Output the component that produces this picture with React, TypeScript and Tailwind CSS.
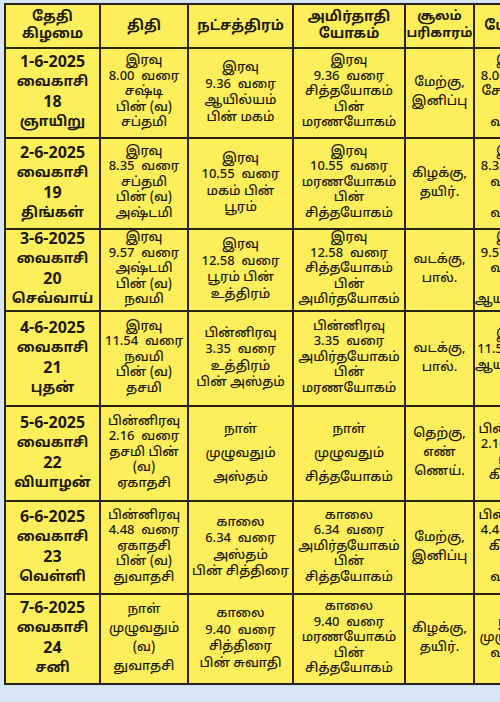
import React from 'react';

type Row = {
    date: string[];
    thithi: string[];
    star: string[];
    yogam: string[];
    soolam: string[];
    extra: string[];
    h: string;
    starLead?: string;
    thithiLead?: string;
};

const rows: Row[] = [
    {
        date: ['1-6-2025', 'வைகாசி', '18', 'ஞாயிறு'],
        thithi: ['இரவு', '8.00  வரை', 'சஷ்டி', 'பின் (வ)', 'சப்தமி'],
        star: ['இரவு', '9.36  வரை', 'ஆயில்யம்', 'பின் மகம்'],
        yogam: ['இரவு', '9.36  வரை', 'சித்தயோகம்', 'பின்', 'மரணயோகம்'],
        soolam: ['மேற்கு,', 'இனிப்பு'],
        extra: ['இரவு', '8.00 வரை', 'சோபனம்', '(வ)', 'வடக்கு'],
        h: 'h-[90px]',
    },
    {
        date: ['2-6-2025', 'வைகாசி', '19', 'திங்கள்'],
        thithi: ['இரவு', '8.35  வரை', 'சப்தமி', 'பின் (வ)', 'அஷ்டமி'],
        star: ['இரவு', '10.55  வரை', 'மகம் பின்', 'பூரம்'],
        yogam: ['இரவு', '10.55  வரை', 'மரணயோகம்', 'பின்', 'சித்தயோகம்'],
        soolam: ['கிழக்கு,', 'தயிர்.'],
        extra: ['இரவு', '8.35 வரை', 'வடக்கு', '(வ)', 'வடக்கு'],
        h: 'h-[91px]',
    },
    {
        date: ['3-6-2025', 'வைகாசி', '20', 'செவ்வாய்'],
        thithi: ['இரவு', '9.57  வரை', 'அஷ்டமி', 'பின் (வ)', 'நவமி'],
        star: ['இரவு', '12.58  வரை', 'பூரம் பின்', 'உத்திரம்'],
        yogam: ['இரவு', '12.58  வரை', 'சித்தயோகம்', 'பின்', 'அமிர்தயோகம்'],
        soolam: ['வடக்கு,', 'பால்.'],
        extra: ['இரவு', '9.57 வரை', 'வடக்கு', '', 'ஆயுஷ்மான்'],
        h: 'h-[82px]',
    },
    {
        date: ['4-6-2025', 'வைகாசி', '21', 'புதன்'],
        thithi: ['இரவு', '11.54  வரை', 'நவமி', 'பின் (வ)', 'தசமி'],
        star: ['பின்னிரவு', '3.35  வரை', 'உத்திரம்', 'பின் அஸ்தம்'],
        yogam: ['பின்னிரவு', '3.35  வரை', 'அமிர்தயோகம்', 'பின்', 'மரணயோகம்'],
        soolam: ['வடக்கு,', 'பால்.'],
        extra: ['இரவு', '11.54 வரை', 'ஆயுஷ்மான்', 'பின்'],
        h: 'h-[95px]',
    },
    {
        date: ['5-6-2025', 'வைகாசி', '22', 'வியாழன்'],
        thithi: ['பின்னிரவு', '2.16  வரை', 'தசமி பின்', '(வ)', 'ஏகாதசி'],
        star: ['நாள்', 'முழுவதும்', 'அஸ்தம்'],
        yogam: ['நாள்', 'முழுவதும்', 'சித்தயோகம்'],
        soolam: ['தெற்கு,', 'எண்', 'ணெய்.'],
        extra: ['பின்னிரவு', '2.16 வரை', 'பூரம்', 'கிழக்கு'],
        h: 'h-[95px]',
        starLead: 'leading-[24px]',
    },
    {
        date: ['6-6-2025', 'வைகாசி', '23', 'வெள்ளி'],
        thithi: ['பின்னிரவு', '4.48  வரை', 'ஏகாதசி', 'பின் (வ)', 'துவாதசி'],
        star: ['காலை', '6.34  வரை', 'அஸ்தம்', 'பின் சித்திரை'],
        yogam: ['காலை', '6.34  வரை', 'அமிர்தயோகம்', 'பின்', 'சித்தயோகம்'],
        soolam: ['மேற்கு,', 'இனிப்பு'],
        extra: ['பின்னிரவு', '4.48 வரை', 'கிழக்கு', '(வ)', 'வடக்கு'],
        h: 'h-[93px]',
    },
    {
        date: ['7-6-2025', 'வைகாசி', '24', 'சனி'],
        thithi: ['நாள்', 'முழுவதும்', '(வ)', 'துவாதசி'],
        star: ['காலை', '9.40  வரை', 'சித்திரை', 'பின் சுவாதி'],
        yogam: ['காலை', '9.40  வரை', 'மரணயோகம்', 'பின்', 'சித்தயோகம்'],
        soolam: ['கிழக்கு,', 'தயிர்.'],
        extra: ['நாள்', 'முழுவதும்', 'வடக்கு'],
        h: 'h-[90px]',
        thithiLead: 'leading-[19px]',
    },
];

function Lines({ items, className }: { items: string[]; className: string }) {
    return (
        <div className={className}>
            {items.map((t, i) => (
                <div key={i} className="whitespace-pre">{t || '\u00a0'}</div>
            ))}
        </div>
    );
}

function DateCell({ items }: { items: string[] }) {
    return (
        <div className="font-bold leading-[20px]">
            <div className="text-[16px]">{items[0]}</div>
            <div className="text-[14px]">{items[1]}</div>
            <div className="text-[16px]">{items[2]}</div>
            <div className="text-[14px]">{items[3]}</div>
        </div>
    );
}

const cell = 'border-[2px] border-[#2a2412] text-center align-middle p-0';

export default function App() {
    return (
        <div
            className="w-[500px] h-[702px] overflow-hidden bg-[#d7e6f4] pt-[3px] pl-[4px]"
            style={{ fontFamily: '"Noto Sans Tamil", "Lohit Tamil", "Noto Sans", sans-serif' }}
        >
            <table className="border-collapse bg-[#fdef5c] text-[#1d1a0c] table-fixed w-[550px]">
                <colgroup>
                    <col className="w-[95px]" />
                    <col className="w-[88px]" />
                    <col className="w-[105px]" />
                    <col className="w-[112px]" />
                    <col className="w-[69px]" />
                    <col className="w-[81px]" />
                </colgroup>
                <thead>
                    <tr className="h-[44px]">
                        <th className={cell}>
                            <Lines items={['தேதி', 'கிழமை']} className="text-[14px] font-bold leading-[17px]" />
                        </th>
                        <th className={cell}>
                            <Lines items={['திதி']} className="text-[14px] font-bold leading-[17px]" />
                        </th>
                        <th className={cell}>
                            <Lines items={['நட்சத்திரம்']} className="text-[14px] font-bold leading-[17px]" />
                        </th>
                        <th className={cell}>
                            <Lines items={['அமிர்தாதி', 'யோகம்']} className="text-[14px] font-bold leading-[17px]" />
                        </th>
                        <th className={cell}>
                            <Lines items={['சூலம்', 'பரிகாரம்']} className="text-[13px] font-bold leading-[17px]" />
                        </th>
                        <th className={cell}>
                            <Lines items={['யோகம்']} className="text-[14px] font-bold leading-[17px]" />
                        </th>
                    </tr>
                </thead>
                <tbody className="font-medium">
                    {rows.map((r, i) => (
                        <tr key={i} className={r.h}>
                            <td className={cell}>
                                <DateCell items={r.date} />
                            </td>
                            <td className={cell}>
                                <Lines items={r.thithi} className={`text-[13px] ${r.thithiLead ?? 'leading-[15.5px]'}`} />
                            </td>
                            <td className={cell}>
                                <Lines items={r.star} className={`text-[13px] ${r.starLead ?? 'leading-[16.5px]'}`} />
                            </td>
                            <td className={cell}>
                                <Lines items={r.yogam} className={`text-[13px] ${r.starLead ?? 'leading-[15.5px]'}`} />
                            </td>
                            <td className={cell}>
                                <Lines items={r.soolam} className="text-[13px] leading-[19px]" />
                            </td>
                            <td className={cell}>
                                <Lines items={r.extra} className="text-[13px] leading-[15.5px]" />
                            </td>
                        </tr>
                    ))}
                </tbody>
            </table>
        </div>
    );
}
